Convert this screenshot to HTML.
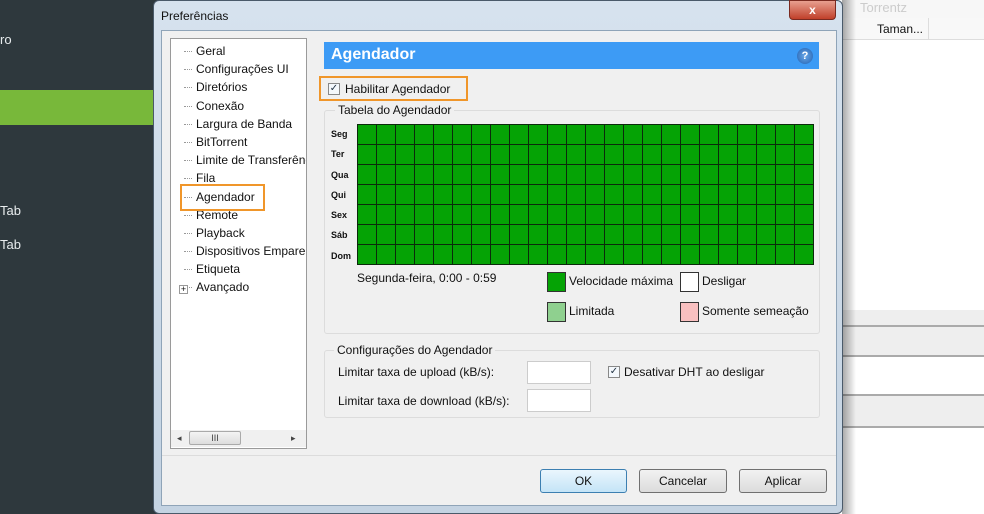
<!DOCTYPE html>
<html><head><meta charset="utf-8"><style>
*{box-sizing:border-box;margin:0;padding:0}
body{width:984px;height:514px;position:relative;overflow:hidden;background:#fff;font-family:"Liberation Sans",sans-serif;font-size:12px;color:#111}
.a{position:absolute}
.side{left:0;top:0;width:160px;height:514px;background:#2e383d;color:#e8ecee;font-size:13px}
.grid{background-color:#05a305;background-image:repeating-linear-gradient(90deg,#0b2a0b 0 1px,transparent 1px 19px),repeating-linear-gradient(180deg,#0b2a0b 0 1px,transparent 1px 20px);border-right:1px solid #0b2a0b;border-bottom:1px solid #0b2a0b}
.btn{height:24px;border:1px solid #707070;border-radius:3px;background:linear-gradient(#f2f2f2,#dcdcdc);text-align:center;line-height:22px}
.cb{width:12px;height:12px;border:1px solid #888;background:#f4f8fc;font-size:10px;line-height:10px;text-align:center;color:#234}
.tree div{height:18.2px;line-height:18px;padding-left:26px;position:relative;white-space:nowrap}
.tree div:before{content:"";position:absolute;left:14px;top:9px;width:8px;border-top:1px dotted #999}
</style></head><body>
<div class="a side">
 <div class="a" style="left:0;top:32px">ro</div>
 <div class="a" style="left:0;top:90px;width:160px;height:35px;background:#78b83a"></div>
 <div class="a" style="left:0;top:203px">Tab</div>
 <div class="a" style="left:0;top:237px">Tab</div>
</div>
<div class="a" style="left:830px;top:0;width:154px;height:18px;background:#f7f7f7;color:#ccc;font-size:13px;padding-left:30px">Torrentz</div>
<div class="a" style="left:830px;top:18px;width:154px;height:22px;border-bottom:1px solid #ddd;background:#f8f8f8"></div>
<div class="a" style="left:877px;top:22px;font-size:12px">Taman...</div>
<div class="a" style="left:928px;top:18px;height:22px;border-left:1px solid #ddd"></div>
<div class="a" style="left:840px;top:310px;width:144px;height:17px;background:#eee;border-bottom:2px solid #aaa"></div>
<div class="a" style="left:840px;top:327px;width:144px;height:30px;background:#eee;border-bottom:2px solid #aaa"></div>
<div class="a" style="left:840px;top:394px;width:144px;height:34px;background:#eee;border-top:2px solid #aaa;border-bottom:2px solid #aaa"></div>
<div class="a" style="left:842px;top:0;width:14px;height:514px;background:linear-gradient(90deg,rgba(0,0,0,.35),rgba(0,0,0,0))"></div>
<!-- dialog -->
<div class="a" style="left:153px;top:0;width:690px;height:514px;background:linear-gradient(#d6e2ee,#c4d3e2);border:1px solid #4a5a6a;border-radius:6px"></div>
<div class="a" style="left:161px;top:9px;font-size:12px">Preferências</div>
<div class="a" style="left:789px;top:0;width:47px;height:20px;background:linear-gradient(#e8a090,#c0402a);border:1px solid #7a2a20;border-radius:0 0 4px 4px;color:#fff;font-weight:bold;text-align:center;line-height:18px">x</div>
<div class="a" style="left:161px;top:30px;width:676px;height:476px;background:#f0f0f0;border:1px solid #8fa4b8"></div>
<div class="a" style="left:162px;top:455px;width:674px;height:1px;background:#dcdcdc"></div>
<!-- tree -->
<div class="a" style="left:170px;top:38px;width:137px;height:411px;background:#fff;border:1px solid #9a9a9a"></div>
<div class="a tree" style="left:170px;top:42px;width:136px;overflow:hidden">
<div>Geral</div><div>Configurações UI</div><div>Diretórios</div><div>Conexão</div><div>Largura de Banda</div><div>BitTorrent</div><div>Limite de Transferência</div><div>Fila</div><div>Agendador</div><div>Remote</div><div>Playback</div><div>Dispositivos Emparelhados</div><div>Etiqueta</div><div>Avançado</div>
</div>
<div class="a" style="left:179px;top:285px;width:9px;height:9px;border:1px solid #999;background:#fff;font-size:9px;line-height:7px;text-align:center">+</div>
<div class="a" style="left:180px;top:184px;width:85px;height:27px;border:2px solid #f0962a"></div>
<div class="a" style="left:171px;top:430px;width:135px;height:17px;background:#f0f0f0;font-size:9px;color:#444"><span class="a" style="left:6px;top:3px">◂</span><div class="a" style="left:18px;top:1px;width:52px;height:14px;border:1px solid #aaa;border-radius:2px;background:linear-gradient(#f4f4f4,#ddd);text-align:center;line-height:12px">III</div><span class="a" style="left:120px;top:3px">▸</span></div>
<!-- header -->
<div class="a" style="left:324px;top:42px;width:495px;height:27px;background:#3d9bf5;color:#fff;font-weight:bold;font-size:16px;line-height:26px;padding-left:7px">Agendador</div>
<div class="a" style="left:797px;top:48px;width:16px;height:16px;border-radius:50%;background:radial-gradient(#6aa8e8,#1f5fb0);color:#fff;font-size:11px;font-weight:bold;text-align:center;line-height:16px">?</div>
<div class="a" style="left:319px;top:76px;width:149px;height:25px;border:2px solid #f0962a"></div>
<div class="a cb" style="left:328px;top:83px">✓</div>
<div class="a" style="left:345px;top:82px;font-size:12px">Habilitar Agendador</div>
<!-- table group -->
<div class="a" style="left:324px;top:110px;width:496px;height:224px;border:1px solid #dcdcdc;border-radius:3px"></div>
<div class="a" style="left:335px;top:103px;background:#f0f0f0;padding:0 3px">Tabela do Agendador</div>
<div class="a" style="left:331px;top:124px;font-size:9px;font-weight:bold;line-height:20.3px">Seg<br>Ter<br>Qua<br>Qui<br>Sex<br>Sáb<br>Dom</div>
<div class="a grid" style="left:357px;top:124px;width:457px;height:141px"></div>
<div class="a" style="left:357px;top:271px">Segunda-feira, 0:00 - 0:59</div>
<div class="a" style="left:547px;top:272px;width:19px;height:20px;background:#05a305;border:1px solid #333"></div>
<div class="a" style="left:569px;top:274px">Velocidade máxima</div>
<div class="a" style="left:680px;top:272px;width:19px;height:20px;background:#fff;border:1px solid #333"></div>
<div class="a" style="left:702px;top:274px">Desligar</div>
<div class="a" style="left:547px;top:302px;width:19px;height:20px;background:#8fd08f;border:1px solid #333"></div>
<div class="a" style="left:569px;top:304px">Limitada</div>
<div class="a" style="left:680px;top:302px;width:19px;height:20px;background:#f9c0c0;border:1px solid #333"></div>
<div class="a" style="left:702px;top:304px">Somente semeação</div>
<!-- config group -->
<div class="a" style="left:324px;top:350px;width:496px;height:68px;border:1px solid #dcdcdc;border-radius:3px"></div>
<div class="a" style="left:334px;top:343px;background:#f0f0f0;padding:0 3px">Configurações do Agendador</div>
<div class="a" style="left:338px;top:365px">Limitar taxa de upload (kB/s):</div>
<div class="a" style="left:338px;top:394px">Limitar taxa de download (kB/s):</div>
<div class="a" style="left:527px;top:361px;width:64px;height:23px;background:#fff;border:1px solid #ccc"></div>
<div class="a" style="left:527px;top:389px;width:64px;height:23px;background:#fff;border:1px solid #ccc"></div>
<div class="a cb" style="left:608px;top:366px">✓</div>
<div class="a" style="left:624px;top:365px">Desativar DHT ao desligar</div>
<!-- buttons -->
<div class="a btn" style="left:540px;top:469px;width:87px;border-color:#3c7fb1;background:linear-gradient(#eaf6fd,#c4e4f7)">OK</div>
<div class="a btn" style="left:639px;top:469px;width:88px">Cancelar</div>
<div class="a btn" style="left:739px;top:469px;width:88px">Aplicar</div>
</body></html>
